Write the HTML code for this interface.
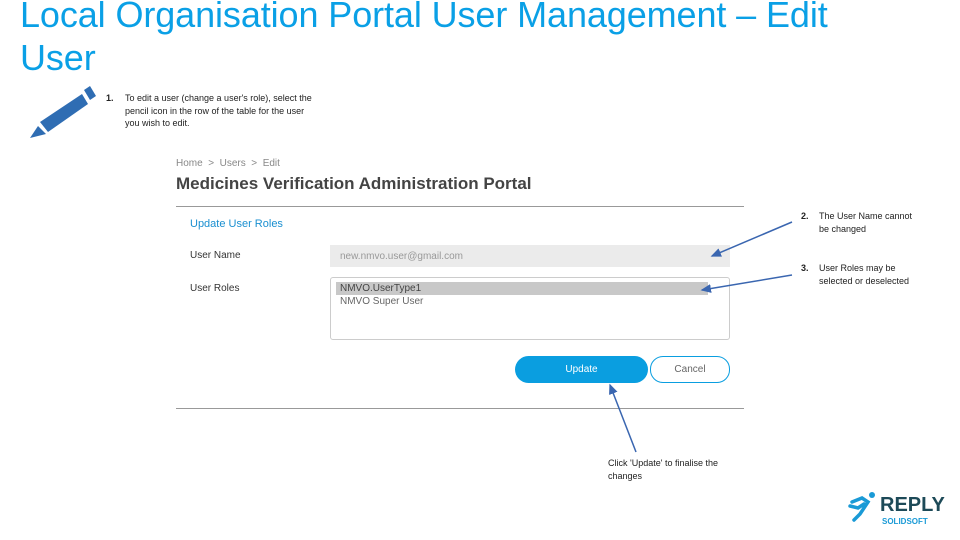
<!DOCTYPE html>
<html><head><style>
body{margin:0;width:960px;height:540px;background:#fff;position:relative;overflow:hidden;font-family:"Liberation Sans",sans-serif}
.a{position:absolute}
h1{position:absolute;left:20px;top:-7px;margin:0;font:36px/43px "Liberation Sans",sans-serif;color:#0aa0e6;letter-spacing:-0.1px}
.s{font-size:9px;color:#222;line-height:12.5px}
</style></head><body>
<h1>Local Organisation Portal User Management – Edit<br>User</h1>
<svg class="a" style="left:28px;top:80px" width="68" height="60" viewBox="0 0 68 60">
<polygon points="12,42 54,14 60,24 20,52" fill="#2f6db3"/>
<polygon points="56,10 62,6 68,16 62,20" fill="#2f6db3"/>
<polygon points="10,46 18,54 2,58" fill="#2f6db3"/>
</svg>
<div class="a s" style="left:106px;top:92px"><b>1.</b></div>
<div class="a s" style="left:125px;top:92px;width:190px">To edit a user (change a user's role), select the pencil icon in the row of the table for the user you wish to edit.</div>
<div class="a" style="left:176px;top:158px;font-size:10px;color:#888">Home &nbsp;&gt;&nbsp; Users &nbsp;&gt;&nbsp; Edit</div>
<div class="a" style="left:176px;top:174px;font-size:17px;font-weight:bold;color:#444">Medicines Verification Administration Portal</div>
<div class="a" style="left:176px;top:206px;width:568px;height:1px;background:#999"></div>
<div class="a" style="left:190px;top:218px;font-size:11px;color:#1a8fd0">Update User Roles</div>
<div class="a" style="left:190px;top:250px;font-size:10px;color:#333">User Name</div>
<div class="a" style="left:190px;top:283px;font-size:10px;color:#333">User Roles</div>
<div class="a" style="left:330px;top:245px;width:400px;height:22px;background:#ebebeb"></div>
<div class="a" style="left:340px;top:251px;font-size:10px;color:#999">new.nmvo.user@gmail.com</div>
<div class="a" style="left:330px;top:277px;width:398px;height:61px;border:1px solid #ccc;border-radius:3px"></div>
<div class="a" style="left:336px;top:282px;width:372px;height:13px;background:#c8c8c8"></div>
<div class="a" style="left:340px;top:283px;font-size:10px;color:#444">NMVO.UserType1</div>
<div class="a" style="left:340px;top:296px;font-size:10px;color:#666">NMVO Super User</div>
<div class="a" style="left:515px;top:356px;width:133px;height:27px;border-radius:14px;background:#0a9ee0;color:#fff;font-size:10px;text-align:center;line-height:27px">Update</div>
<div class="a" style="left:650px;top:356px;width:78px;height:25px;border-radius:13px;border:1px solid #0a9ee0;color:#666;font-size:10px;text-align:center;line-height:25px">Cancel</div>
<div class="a" style="left:176px;top:408px;width:568px;height:1px;background:#999"></div>
<div class="a s" style="left:801px;top:210px"><b>2.</b></div>
<div class="a s" style="left:819px;top:210px;width:95px">The User Name cannot be changed</div>
<div class="a s" style="left:801px;top:262px"><b>3.</b></div>
<div class="a s" style="left:819px;top:262px;width:110px">User Roles may be selected or deselected</div>
<div class="a s" style="left:608px;top:457px;width:115px">Click 'Update' to finalise the changes</div>
<svg class="a" style="left:0;top:0" width="960" height="540">
<defs><marker id="m" markerWidth="8" markerHeight="8" refX="6" refY="3" orient="auto"><path d="M0,0L7,3L0,6z" fill="#3a66b0"/></marker></defs>
<g stroke="#3a66b0" stroke-width="1.5" marker-end="url(#m)">
<line x1="792" y1="222" x2="712" y2="256"/>
<line x1="792" y1="275" x2="702" y2="290"/>
<line x1="636" y1="452" x2="610" y2="385"/>
</g></svg>
<svg class="a" style="left:848px;top:490px" width="30" height="32" viewBox="0 0 30 32">
<circle cx="24" cy="5" r="3" fill="#1a9ad6"/>
<path d="M4,12 L14,8 L20,12 L12,24 L6,30 M16,14 L10,18 L2,16" stroke="#1a9ad6" stroke-width="3.5" fill="none" stroke-linecap="round"/>
</svg>
<div class="a" style="left:880px;top:494px;font-size:20px;font-weight:bold;color:#1d4a58">REPLY</div>
<div class="a" style="left:882px;top:517px;font-size:8px;font-weight:bold;color:#1a9ad6">SOLIDSOFT</div>
</body></html>
